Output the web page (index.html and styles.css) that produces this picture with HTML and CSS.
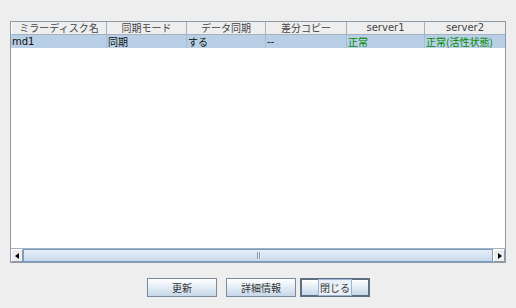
FILE: index.html
```html
<!DOCTYPE html>
<html lang="ja">
<head>
  <meta charset="UTF-8" />
  <title>ミラーディスク</title>
  <link rel="stylesheet" href="styles.css">
</head>
<body>
  <div class="dialog">
    <div class="frame">
      <div class="grid head">
        <div class="hcell">ミラーディスク名</div>
        <div class="hcell">同期モード</div>
        <div class="hcell">データ同期</div>
        <div class="hcell">差分コピー</div>
        <div class="hcell latin">server1</div>
        <div class="hcell latin">server2</div>
      </div>
      <div class="grid row selected">
        <div class="cell latin">md1</div>
        <div class="cell">同期</div>
        <div class="cell">する</div>
        <div class="cell latin">--</div>
        <div class="cell ok">正常</div>
        <div class="cell ok">正常(活性状態)</div>
      </div>
      <div class="empty"></div>
      <div class="hscroll">
        <div class="arrow left"></div>
        <div class="thumb"><span class="grip"></span></div>
        <div class="arrow right"></div>
      </div>
    </div>
    <div class="buttons">
      <button class="btn">更新</button>
      <button class="btn">詳細情報</button>
      <button class="btn focused"><span class="focus">閉じる</span></button>
    </div>
  </div>
</body>
</html>
```

FILE: styles.css
```css
body {
  margin: 0;
  background: #eeeeee;
  font-family: "Noto Sans CJK JP", "DejaVu Sans", sans-serif;
  font-size: 10px;
  color: #222;
}
.dialog {
  width: 516px;
  height: 308px;
  padding: 21px 0 0 10px;
  box-sizing: border-box;
}
.frame {
  width: 494px;
  height: 240px;
  border: 1px solid #8e9aa6;
  background: #ffffff;
  display: flex;
  flex-direction: column;
}
.grid {
  display: grid;
  grid-template-columns: 96px 80px 79px 81px 78px 80px;
  height: 13px;
}
.head .hcell {
  background: #eeeeee;
  border-right: 1px solid #a3b2c1;
  border-bottom: 1px solid #a3b2c1;
  text-align: center;
  line-height: 12px;
  color: #444;
  white-space: nowrap;
}
.head .hcell:first-child {
  border-left: 1px solid #ffffff;
}
.head .hcell:last-child {
  border-right: none;
}
.selected {
  background: #b8cfe5;
}
.cell {
  line-height: 13px;
  padding-left: 1px;
  border-right: 1px solid #a9bdd2;
  white-space: nowrap;
  color: #111;
}
.cell:last-child {
  border-right: none;
}
.latin {
  font-family: "DejaVu Sans", "Noto Sans CJK JP", sans-serif;
  font-size: 10px;
}
.ok {
  color: #008a00;
}
.empty {
  flex: 1;
}
.hscroll {
  height: 13px;
  display: flex;
  border-top: 1px solid #a3b2c1;
  background: #eeeeee;
}
.arrow {
  width: 12px;
  background: #eeeeee;
  border: 1px solid #ffffff;
  border-right-color: #8e9aa6;
  border-bottom-color: #8e9aa6;
  box-sizing: border-box;
  position: relative;
}
.arrow::after {
  content: "";
  position: absolute;
  top: 3px;
  border-top: 3px solid transparent;
  border-bottom: 3px solid transparent;
}
.arrow.left::after {
  left: 3px;
  border-right: 4px solid #000;
}
.arrow.right::after {
  left: 4px;
  border-left: 4px solid #000;
}
.thumb {
  flex: 1;
  border: 1px solid #7a9cc4;
  background: linear-gradient(#e6eef7, #c8d9ec);
  display: flex;
  align-items: center;
  justify-content: center;
}
.grip {
  width: 4px;
  height: 7px;
  background: repeating-linear-gradient(90deg, #7f9ab8 0 1px, #e8f0f8 1px 2px);
  margin-left: 2px;
}
.buttons {
  display: flex;
  gap: 9px;
  margin-top: 15px;
  padding-left: 137px;
}
.btn {
  width: 70px;
  height: 19px;
  padding: 0;
  font-family: "Noto Sans CJK JP", sans-serif;
  font-size: 10px;
  color: #333;
  border: 1px solid #7a8a99;
  background: linear-gradient(#ffffff, #dde8f3 60%, #c7d7e8);
}
.btn.focused {
  border: 2px solid #5d6e80;
  margin-left: -5px;
}
.focus {
  outline: 1px solid #9cb4d0;
  background: #e9f0f8;
  padding: 0 1px;
}
```
